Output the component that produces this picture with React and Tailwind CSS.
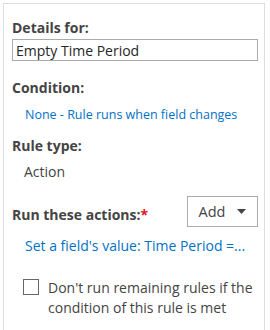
import React, { useState } from "react";

export default function App() {
  const [stop, setStop] = useState(false);

  return (
    <div
      className="h-[330px] w-[270px] overflow-hidden bg-white pl-[3px] pt-[3px]"
      style={{ fontFamily: '"Open Sans", "Noto Sans", sans-serif' }}
    >
      <div className="h-[340px] w-[262px] border border-[#dedede] pl-[8px] pr-[6px] pt-[14px] text-[#444444]">
        <div className="text-[14px] font-bold leading-[20px]">Details for:</div>
        <input
          type="text"
          defaultValue="Empty Time Period"
          className="mt-[1px] block h-[22px] w-full border border-[#ababab] px-[3px] text-[14px] leading-[20px] text-[#262626] outline-none"
        />

        <div className="mt-[17px] text-[14px] font-bold leading-[20px]">Condition:</div>
        <div className="mt-[8px] pl-[13px] text-[12.5px] leading-[18px] text-[#0072c6]">
          None - Rule runs when field changes
        </div>

        <div className="mt-[12px] text-[14px] font-bold leading-[20px]">Rule type:</div>
        <div className="mt-[6px] pl-[12px] text-[14px] leading-[20px]">Action</div>

        <div className="mt-[14px] flex items-center justify-between">
          <div className="pt-[6px] text-[14px] font-bold leading-[20px]">
            Run these actions:<span className="text-[#e81123]">*</span>
          </div>
          <button className="flex h-[31px] w-[71px] items-center justify-center gap-[12px] border border-[#ababab] bg-white text-[14.5px] text-[#444444]">
            <span>Add</span>
            <svg width="9" height="5" viewBox="0 0 9 5">
              <path d="M0 0h9L4.5 5z" fill="#444444" />
            </svg>
          </button>
        </div>

        <div className="mt-[9px] pl-[13px] text-[14px] leading-[20px] text-[#0072c6]">
          Set a field's value: Time Period =...
        </div>

        <label className="mt-[22px] flex items-start gap-[9px] pl-[11px]">
          <span
            onClick={() => setStop(!stop)}
            className="mt-[1px] flex h-[16px] w-[16px] shrink-0 items-center justify-center border border-[#666666] bg-white"
          >
            {stop && (
              <svg width="10" height="10" viewBox="0 0 10 10">
                <path d="M1 5l3 3 5-7" stroke="#444" strokeWidth="1.5" fill="none" />
              </svg>
            )}
          </span>
          <span className="text-[14px] leading-[20px]">
            Don't run remaining rules if the condition of this rule is met
          </span>
        </label>
      </div>
    </div>
  );
}
